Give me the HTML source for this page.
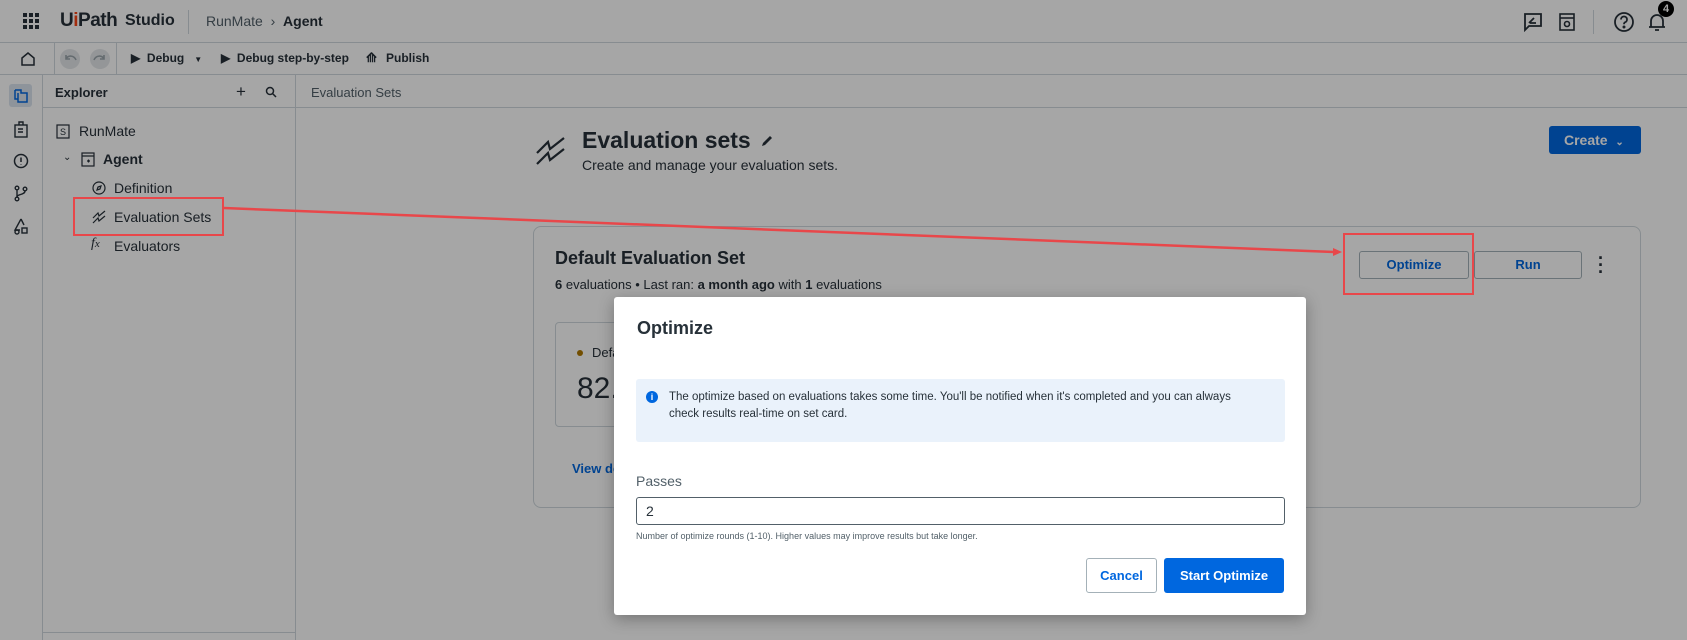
<!DOCTYPE html>
<html><head><meta charset="utf-8"><style>
*{box-sizing:border-box;margin:0;padding:0}
body{width:1687px;height:640px;overflow:hidden;position:relative;background:#fff;font-family:"Liberation Sans",sans-serif;color:#273139}
.a{position:absolute;white-space:nowrap}
.hl{position:absolute;background:#cfd8dd}
svg{position:absolute}
</style></head><body>
<!-- top bar -->
<div class="a" style="left:0;top:0;width:1687px;height:43px;border-bottom:1px solid #cfd8dd"></div>
<svg style="left:23px;top:13px" width="16" height="16" viewBox="0 0 16 16" fill="#273139"><rect x="0" y="0" width="4" height="4"/><rect x="6" y="0" width="4" height="4"/><rect x="12" y="0" width="4" height="4"/><rect x="0" y="6" width="4" height="4"/><rect x="6" y="6" width="4" height="4"/><rect x="12" y="6" width="4" height="4"/><rect x="0" y="12" width="4" height="4"/><rect x="6" y="12" width="4" height="4"/><rect x="12" y="12" width="4" height="4"/></svg>
<div class="a" style="left:60px;top:10px;font-size:19px;font-weight:bold;letter-spacing:-0.5px">U<span style="color:#fa4616">i</span>Path</div>
<div class="a" style="left:125px;top:12px;font-size:16px;font-weight:bold">Studio</div>
<div class="hl" style="left:188px;top:10px;width:1px;height:24px"></div>
<div class="a" style="left:206px;top:13px;font-size:14px;color:#526069">RunMate &nbsp;›&nbsp; <span style="color:#273139;font-weight:bold">Agent</span></div>
<svg style="left:1523px;top:12px" width="20" height="20" viewBox="0 0 20 20" fill="none" stroke="#273139" stroke-width="1.8"><path d="M2 2h16v12H6l-4 4z"/><path d="M6 11l5-5M7 11h6"/></svg>
<svg style="left:1558px;top:12px" width="18" height="20" viewBox="0 0 18 20" fill="none" stroke="#273139" stroke-width="1.6"><rect x="2" y="2" width="14" height="16"/><path d="M2 6h14"/><circle cx="9" cy="12" r="2.5"/></svg>
<div class="hl" style="left:1593px;top:10px;width:1px;height:24px"></div>
<svg style="left:1613px;top:11px" width="22" height="22" viewBox="0 0 22 22" fill="none" stroke="#273139" stroke-width="1.8"><circle cx="11" cy="11" r="9"/><path d="M8 8.5a3 3 0 1 1 4 2.8c-.8.4-1 1-1 2"/><circle cx="11" cy="16" r=".6" fill="#273139"/></svg>
<svg style="left:1648px;top:12px" width="18" height="20" viewBox="0 0 18 20" fill="none" stroke="#273139" stroke-width="1.8"><path d="M3 15V9a6 6 0 0 1 12 0v6zM1 15h16M7 18h4"/></svg>
<div class="a" style="left:1658px;top:1px;width:16px;height:16px;border-radius:8px;background:#000;color:#fff;font-size:11px;font-weight:bold;text-align:center;line-height:16px">4</div>
<!-- toolbar -->
<div class="a" style="left:0;top:43px;width:1687px;height:32px;border-bottom:1px solid #cfd8dd"></div>
<div class="hl" style="left:54px;top:43px;width:1px;height:32px"></div>
<div class="hl" style="left:116px;top:43px;width:1px;height:32px"></div>
<svg style="left:20px;top:51px" width="16" height="16" viewBox="0 0 16 16" fill="none" stroke="#273139" stroke-width="1.5"><path d="M2 7l6-5 6 5v7H2z"/></svg>
<div class="a" style="left:60px;top:49px;width:20px;height:20px;border-radius:10px;background:#e3e7ea"></div>
<div class="a" style="left:90px;top:49px;width:20px;height:20px;border-radius:10px;background:#e3e7ea"></div>
<svg style="left:63px;top:53px" width="14" height="12" viewBox="0 0 14 12" fill="none" stroke="#9aa5ab" stroke-width="1.6"><path d="M3 2v4h4M3 6c2-4 8-4 10 1"/></svg>
<svg style="left:93px;top:53px" width="14" height="12" viewBox="0 0 14 12" fill="none" stroke="#9aa5ab" stroke-width="1.6"><path d="M11 2v4H7M11 6C9 2 3 2 1 7"/></svg>
<div class="a" style="left:131px;top:51px;font-size:12px;font-weight:bold">▶&nbsp; Debug &nbsp; <span style="font-size:8px">▼</span></div>
<div class="a" style="left:221px;top:51px;font-size:12px;font-weight:bold">▶&nbsp; Debug step-by-step</div>
<div class="a" style="left:366px;top:50px;font-size:13px;font-weight:bold">⟰</div>
<div class="a" style="left:386px;top:51px;font-size:12px;font-weight:bold">Publish</div>
<!-- left rail -->
<div class="a" style="left:0;top:75px;width:43px;height:565px;border-right:1px solid #cfd8dd"></div>
<div class="a" style="left:9px;top:84px;width:23px;height:23px;background:#dbe4ef;border-radius:3px"></div>
<svg style="left:14px;top:89px" width="14" height="14" viewBox="0 0 14 14" fill="none" stroke="#0067df" stroke-width="1.5"><path d="M1 1h6v3h6v9H4V4"/><path d="M1 1v9h3"/></svg>
<svg style="left:13px;top:121px" width="16" height="17" viewBox="0 0 16 17" fill="none" stroke="#273139" stroke-width="1.4"><rect x="2" y="4" width="12" height="12"/><path d="M6 4V1h4v3M5 8h5M5 11h5"/></svg>
<svg style="left:13px;top:153px" width="16" height="16" viewBox="0 0 16 16" fill="none" stroke="#273139" stroke-width="1.5"><circle cx="8" cy="8" r="6.5"/><path d="M8 4.5v4.5M8 11v.5"/></svg>
<svg style="left:13px;top:185px" width="16" height="17" viewBox="0 0 16 17" fill="none" stroke="#273139" stroke-width="1.4"><circle cx="4" cy="3" r="1.8"/><circle cx="4" cy="14" r="1.8"/><circle cx="12" cy="4" r="1.8"/><path d="M4 5v7M12 6c0 4-8 3-8 6"/></svg>
<svg style="left:13px;top:218px" width="16" height="17" viewBox="0 0 16 17" fill="none" stroke="#273139" stroke-width="1.4"><path d="M8 1L2 12h5"/><path d="M8 1l3 6"/><circle cx="4" cy="14" r="2"/><rect x="9" y="10" width="5" height="5"/></svg>
<!-- explorer -->
<div class="a" style="left:43px;top:75px;width:253px;height:565px;border-right:1px solid #cfd8dd"></div>
<div class="a" style="left:43px;top:107px;width:253px;height:1px;background:#cfd8dd"></div>
<div class="a" style="left:43px;top:632px;width:253px;height:1px;background:#cfd8dd"></div>
<div class="a" style="left:55px;top:85px;font-size:13px;font-weight:bold">Explorer</div>
<div class="a" style="left:236px;top:82px;font-size:17px">+</div>
<svg style="left:265px;top:86px" width="12" height="12" viewBox="0 0 12 12" fill="none" stroke="#273139" stroke-width="1.5"><circle cx="5" cy="5" r="3.5"/><path d="M7.5 7.5l3.5 3.5"/></svg>
<svg style="left:56px;top:124px" width="14" height="15" viewBox="0 0 14 15" fill="none" stroke="#273139" stroke-width="1.2"><rect x="1" y="1" width="12" height="13"/><text x="4" y="11" font-size="9" fill="#273139" stroke="none" font-family="Liberation Sans">S</text></svg>
<div class="a" style="left:79px;top:123px;font-size:14px">RunMate</div>
<div class="a" style="left:63px;top:152px;font-size:10px">⌄</div>
<svg style="left:81px;top:152px" width="14" height="15" viewBox="0 0 14 15" fill="none" stroke="#273139" stroke-width="1.2"><rect x="1" y="1" width="12" height="13"/><path d="M1 4h12M6 9h3M7.5 7.5v3"/></svg>
<div class="a" style="left:103px;top:151px;font-size:14px;font-weight:bold">Agent</div>
<svg style="left:92px;top:181px" width="14" height="14" viewBox="0 0 14 14" fill="none" stroke="#273139" stroke-width="1.2"><circle cx="7" cy="7" r="6"/><path d="M5 9l1-3 3-1-1 3z"/></svg>
<div class="a" style="left:114px;top:180px;font-size:14px">Definition</div>
<svg style="left:92px;top:210px" width="14" height="14" viewBox="0 0 14 14" fill="none" stroke="#273139" stroke-width="1.2"><path d="M1 8l5-5 1 3 6-5M1 13l5-5 1 3 6-5"/></svg>
<div class="a" style="left:114px;top:209px;font-size:14px">Evaluation Sets</div>
<div class="a" style="left:91px;top:236px;font-size:14px;font-style:italic;font-family:'Liberation Serif',serif">f<span style="font-size:11px">x</span></div>
<div class="a" style="left:114px;top:238px;font-size:14px">Evaluators</div>
<!-- main tab -->
<div class="a" style="left:296px;top:107px;width:1391px;height:1px;background:#cfd8dd"></div>
<div class="a" style="left:311px;top:85px;font-size:13px;color:#526069">Evaluation Sets</div>
<svg style="left:536px;top:137px" width="30" height="28" viewBox="0 0 30 28" fill="none" stroke="#273139" stroke-width="2.2"><path d="M1 16l11-11 2 7 14-11M1 27l11-11 2 7 14-11"/></svg>
<div class="a" style="left:582px;top:127px;font-size:23px;font-weight:bold">Evaluation sets</div>
<svg style="left:760px;top:134px" width="14" height="14" viewBox="0 0 14 14" fill="#273139"><path d="M2 12l1-3 7-7 2 2-7 7z"/></svg>
<div class="a" style="left:582px;top:157px;font-size:14px">Create and manage your evaluation sets.</div>
<div class="a" style="left:1549px;top:126px;width:92px;height:28px;background:#0067df;border-radius:3px;color:#fff;font-size:14px;font-weight:bold;line-height:28px;padding-left:15px">Create &nbsp;<span style="font-size:10px">⌄</span></div>
<!-- card -->
<div class="a" style="left:533px;top:226px;width:1108px;height:282px;border:1px solid #cfd8dd;border-radius:8px"></div>
<div class="a" style="left:555px;top:248px;font-size:18px;font-weight:bold">Default Evaluation Set</div>
<div class="a" style="left:555px;top:277px;font-size:13px"><b>6</b> evaluations • Last ran: <b>a month ago</b> with <b>1</b> evaluations</div>
<div class="a" style="left:1359px;top:251px;width:110px;height:28px;border:1px solid #a4b1b8;border-radius:3px;color:#0067df;font-size:13px;font-weight:bold;text-align:center;line-height:26px">Optimize</div>
<div class="a" style="left:1474px;top:251px;width:108px;height:28px;border:1px solid #a4b1b8;border-radius:3px;color:#0067df;font-size:13px;font-weight:bold;text-align:center;line-height:26px">Run</div>
<div class="a" style="left:1598px;top:255px;font-size:18px;font-weight:bold;line-height:7px">·<br>·<br>·</div>
<div class="a" style="left:555px;top:322px;width:200px;height:105px;border:1px solid #cfd8dd;border-radius:4px"></div>
<div class="a" style="left:577px;top:350px;width:6px;height:6px;border-radius:3px;background:#b07800"></div>
<div class="a" style="left:592px;top:345px;font-size:13px">Default</div>
<div class="a" style="left:577px;top:372px;font-size:30px">82.</div>
<div class="a" style="left:572px;top:461px;font-size:13px;color:#0067df;font-weight:bold">View details</div>
<!-- overlay -->
<div class="a" style="left:0;top:0;width:1687px;height:640px;background:rgba(0,0,0,0.35)"></div>
<!-- annotations -->
<div class="a" style="left:73px;top:197px;width:151px;height:39px;border:2px solid #e8474a"></div>
<div class="a" style="left:1343px;top:233px;width:131px;height:62px;border:2px solid #e8474a"></div>
<svg style="left:0;top:0" width="1687" height="640"><line x1="224" y1="208" x2="1334" y2="252" stroke="#e8474a" stroke-width="2.5"/><path d="M1342 252l-9-4v8z" fill="#e8474a"/></svg>
<!-- modal -->
<div class="a" style="left:614px;top:297px;width:692px;height:318px;background:#fff;border-radius:3px;box-shadow:0 4px 16px rgba(0,0,0,0.3)"></div>
<div class="a" style="left:637px;top:318px;font-size:18px;font-weight:bold">Optimize</div>
<div class="a" style="left:636px;top:379px;width:649px;height:63px;background:#eaf2fb;border-radius:3px"></div>
<div class="a" style="left:646px;top:391px;width:12px;height:12px;border-radius:6px;background:#0067df;color:#fff;font-size:9px;font-weight:bold;text-align:center;line-height:12px">i</div>
<div class="a" style="left:669px;top:389px;font-size:11.5px;line-height:17px;color:#273139">The optimize based on evaluations takes some time. You'll be notified when it's completed and you can always<br>check results real-time on set card.</div>
<div class="a" style="left:636px;top:473px;font-size:14px;color:#526069">Passes</div>
<div class="a" style="left:636px;top:497px;width:649px;height:28px;border:1px solid #526069;border-radius:3px;font-size:14px;padding:5px 0 0 9px">2</div>
<div class="a" style="left:636px;top:531px;font-size:9px;color:#526069">Number of optimize rounds (1-10). Higher values may improve results but take longer.</div>
<div class="a" style="left:1086px;top:558px;width:71px;height:35px;border:1px solid #a4b1b8;border-radius:3px;color:#0067df;font-size:13px;font-weight:bold;text-align:center;line-height:33px">Cancel</div>
<div class="a" style="left:1164px;top:558px;width:120px;height:35px;background:#0067df;border-radius:3px;color:#fff;font-size:13px;font-weight:bold;text-align:center;line-height:35px">Start Optimize</div>
</body></html>
